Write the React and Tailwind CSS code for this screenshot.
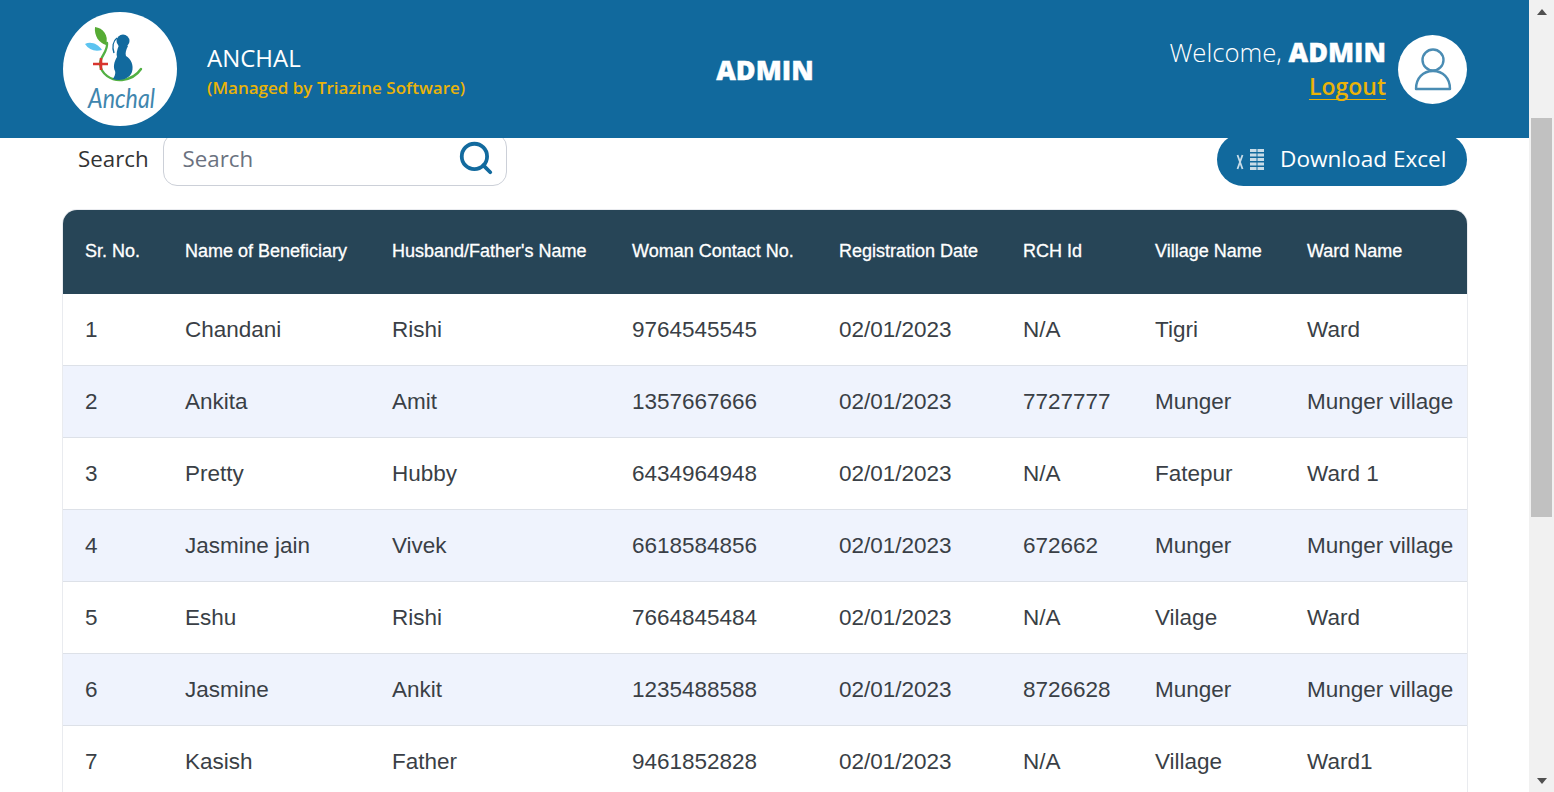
import React from "react";
import { Search } from "lucide-react";

const rows = [
  ["1", "Chandani", "Rishi", "9764545545", "02/01/2023", "N/A", "Tigri", "Ward"],
  ["2", "Ankita", "Amit", "1357667666", "02/01/2023", "7727777", "Munger", "Munger village"],
  ["3", "Pretty", "Hubby", "6434964948", "02/01/2023", "N/A", "Fatepur", "Ward 1"],
  ["4", "Jasmine jain", "Vivek", "6618584856", "02/01/2023", "672662", "Munger", "Munger village"],
  ["5", "Eshu", "Rishi", "7664845484", "02/01/2023", "N/A", "Vilage", "Ward"],
  ["6", "Jasmine", "Ankit", "1235488588", "02/01/2023", "8726628", "Munger", "Munger village"],
  ["7", "Kasish", "Father", "9461852828", "02/01/2023", "N/A", "Village", "Ward1"],
];

const columns = [
  { title: "Sr. No.", width: "w-[100px]" },
  { title: "Name of Beneficiary", width: "w-[207px]" },
  { title: "Husband/Father's Name", width: "w-[240px]" },
  { title: "Woman Contact No.", width: "w-[207px]" },
  { title: "Registration Date", width: "w-[184px]" },
  { title: "RCH Id", width: "w-[132px]" },
  { title: "Village Name", width: "w-[152px]" },
  { title: "Ward Name", width: "w-[182px]" },
];

function Logo() {
  return (
    <div className="w-[114px] h-[114px] rounded-full bg-white overflow-hidden shrink-0">
      <svg viewBox="0 0 114 114" className="w-full h-full">
        {/* leaves and stem */}
        <path d="M32 15 C40 16 46 23 43 33 C36 31 31 24 32 15Z" fill="#56ab34" />
        <path d="M44 31 C45 40 37 44 37 52 C38 62 48 69 59 68 C68 67 74 63 78 57" fill="none" stroke="#52b043" strokeWidth="2.400" strokeLinecap="round" />
        <path d="M22 32 C28 29 35 32 39 38 C32 40 26 38 22 32Z" fill="#5cc4f0" />
        {/* mother */}
        <circle cx="60" cy="29" r="6.500" fill="#126a9e" />
        <path d="M56 33 C54 38 53 42 54 45 C51 50 50 55 52 59 C53 62 51 65 50 67 C56 69 66 68 69 60 C71 53 68 47 63 44 C62 41 63 38 65 34 Z" fill="#126a9e" />
        <path d="M54 26 C50 29 49 35 51 41" fill="none" stroke="#126a9e" strokeWidth="1.400" />
        <path d="M38 46 L38 58 M30 52 L45 52" stroke="#d8352e" strokeWidth="2.600" />
        <text x="25" y="96" textLength="67" lengthAdjust="spacingAndGlyphs" fill="#3f86ae" fontSize="27" fontStyle="italic" fontFamily="Lato, sans-serif">Anchal</text>
      </svg>
    </div>
  );
}

function UserBadge() {
  return (
    <div className="w-[69px] h-[69px] rounded-full bg-white flex items-center justify-center shrink-0">
      <svg viewBox="0 0 69 69" className="w-[69px] h-[69px]" fill="none" stroke="#4a8cb3" strokeWidth="2.400">
        <circle cx="35" cy="25" r="10.500" />
        <path d="M18 54 C18 43 25 36 35 36 C45 36 52 43 52 54 Z" strokeLinejoin="round" />
      </svg>
    </div>
  );
}

function ExcelIcon() {
  return (
    <svg width="28" height="22" viewBox="0 0 28 22" fill="#c8dce8" className="shrink-0">
      <path d="M1.500 7 L6.500 21 M6.500 7 L1.500 21" stroke="#c8dce8" strokeWidth="1.800" />
      <rect x="14" y="1" width="14" height="3" />
      <rect x="14" y="5.500" width="14" height="3" />
      <rect x="14" y="10" width="14" height="3" />
      <rect x="14" y="14.500" width="14" height="3" />
      <rect x="14" y="19" width="14" height="3" />
      <path d="M21 1 V22" stroke="#126a9e" strokeWidth="1" />
    </svg>
  );
}

export default function App() {
  return (
    <div className="h-screen overflow-hidden flex bg-white font-['Open_Sans',sans-serif]">
      <div className="flex-1 min-w-0">
        {/* Header */}
        <header className="relative z-10 h-[138px] bg-[#11699d] pr-[62px] pl-[63px] grid grid-cols-3 items-center">
          <div className="flex items-center gap-[30px]">
            <Logo />
            <div className="pt-[3px] whitespace-nowrap">
              <div className="text-[24px] leading-[32px] text-white">ANCHAL</div>
              <div className="mt-[2px] text-[17px] leading-[24px] font-semibold text-[#eab308]">(Managed by Triazine Software)</div>
            </div>
          </div>
          <div className="pt-[2px] text-center text-[27px] font-extrabold text-white [-webkit-text-stroke:0.4px_white]">ADMIN</div>
          <div className="flex items-center justify-end gap-[12px]">
            <div className="pb-[2px] text-right">
              <div className="mb-[5px] text-[25.700px] leading-[32px] font-light text-white whitespace-nowrap">
                Welcome, <span className="text-[27px] font-extrabold [-webkit-text-stroke:0.4px_white]">ADMIN</span>
              </div>
              <a className="inline-block text-[23px] leading-[25px] font-semibold text-[#eab308] border-b border-[#eab308]">Logout</a>
            </div>
            <UserBadge />
          </div>
        </header>

        {/* Search row */}
        <div className="-mt-[5px] pl-[78px] pr-[62px] flex items-center justify-between">
          <div className="flex items-center gap-[14px]">
            <label className="pb-[2px] text-[22.300px] text-[#333]">Search</label>
            <div className="w-[344px] h-[53px] border border-[#ccd0d8] rounded-[14px] pl-[19px] pr-[11px] flex items-center justify-between">
              <span className="pb-[2px] text-[22.300px] text-[#6b7280]">Search</span>
              <Search size={38} strokeWidth={2.400} className="mb-[3px] text-[#126a9e]" />
            </div>
          </div>
          <button className="w-[250px] h-[53px] rounded-full bg-[#11699d] text-white text-[22.600px] pl-[19px] pb-[2px] flex items-center gap-[16px] whitespace-nowrap">
            <ExcelIcon />
            Download Excel
          </button>
        </div>

        {/* Table */}
        <div className="ml-[63px] mt-[24px] w-[1404px] rounded-t-[14px] overflow-hidden shadow-[0_0_0_1px_#e9ebef] font-['Liberation_Sans',sans-serif]">
          <table className="w-full table-fixed border-separate border-spacing-0">
            <thead>
              <tr className="h-[84px] bg-[#274557]">
                {columns.map((col) => (
                  <th key={col.title} className={`${col.width} pl-[22px] pb-[2px] text-left text-[18px] font-normal text-white [-webkit-text-stroke:0.3px_white] whitespace-nowrap`}>
                    {col.title}
                  </th>
                ))}
              </tr>
            </thead>
            <tbody>
              {rows.map((row, i) => (
                <tr key={row[0]} className={`h-[72px] ${i % 2 ? "bg-[#eff3fd]" : "bg-white"}`}>
                  {row.map((cell, j) => (
                    <td key={j} className="pl-[22px] border-b border-[#dde1e8] text-[22.500px] text-[#3a3f46] whitespace-nowrap">{cell}</td>
                  ))}
                </tr>
              ))}
            </tbody>
          </table>
        </div>
      </div>

      {/* Scrollbar */}
      <div className="w-[25px] shrink-0 bg-[#f1f1f1] flex flex-col items-center pt-[9px]">
        <div className="w-0 h-0 border-x-[5px] border-x-transparent border-b-[6px] border-b-[#505050]" />
        <div className="mt-[103px] w-[21px] h-[399px] bg-[#c1c1c1]" />
        <div className="mt-auto mb-[8px] w-0 h-0 border-x-[5px] border-x-transparent border-t-[6px] border-t-[#505050]" />
      </div>
    </div>
  );
}
